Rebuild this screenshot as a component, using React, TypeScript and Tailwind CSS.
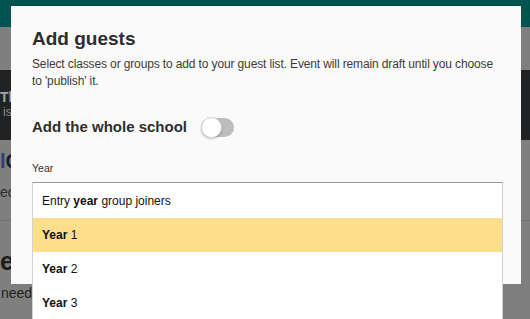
import React from "react";

export default function App() {
  const font = "font-['Liberation_Sans',Arial,Helvetica,sans-serif]";
  return (
    <div className={`relative w-[530px] h-[319px] overflow-hidden bg-[#7f7f7f] ${font}`}>
      {/* page behind the overlay */}
      <div className="flex flex-col">
        <div className="h-[27px] bg-[#00544f]" />
        <div className="h-[43px]" />
        <div className="h-[70px] bg-[#212223] pt-[19px]">
          <div className="text-[14px] leading-[16px] font-bold text-[#a3a3a3] whitespace-nowrap">Th</div>
          <div className="ml-[3px] text-[12px] leading-[14px] text-[#8f8f8f] whitespace-nowrap">is</div>
        </div>
        <div className="h-[33px] flex items-end">
          <div className="text-[20px] leading-[24px] font-bold whitespace-nowrap">
            <span className="text-[#2c3f7c]">l</span>
            <span className="text-[#1a1b2c]">C</span>
          </div>
        </div>
        <div className="h-[27px] flex items-end">
          <div className="text-[14px] leading-[16px] text-[#2a2a2a] whitespace-nowrap">ec</div>
        </div>
        <div className="h-[21px] border-b border-[#717171]" />
        <div className="h-[55px] flex items-end">
          <div className="text-[25px] leading-[30px] font-bold text-[#1c1c1c] whitespace-nowrap">es</div>
        </div>
        <div className="h-[25px] flex items-end">
          <div className="ml-[1px] text-[14px] leading-[16px] text-[#222222] whitespace-nowrap">need</div>
        </div>
      </div>

      {/* modal */}
      <div className="absolute left-[11px] top-[6px] w-[510px] h-[278px] bg-[#fafafa] pl-[21px] pr-[18px] pt-[21px] text-[#333333]">
        <h2 className="text-[19px] leading-[24px] font-bold text-[#2e2e2e]">Add guests</h2>
        <p className="mt-[5px] text-[12px] leading-[17px] tracking-[-0.13px] text-[#3a3a3a]">
          Select classes or groups to add to your guest list. Event will remain draft until you choose to 'publish' it.
        </p>
        <div className="mt-[27px] flex items-center h-[20px]">
          <span className="text-[15px] leading-[20px] font-bold text-[#2e2e2e]">Add the whole school</span>
          <div className="relative ml-[14px] w-[33px] h-[19px] rounded-full bg-[#bdbdbd]">
            <div className="absolute left-0 top-[-1px] w-[21px] h-[21px] rounded-full bg-white border border-[#d6d6d6] shadow-[0_1px_2px_rgba(0,0,0,0.25)]" />
          </div>
        </div>
        <div className="mt-[24px] text-[10.5px] leading-[14px] text-[#333333]">Year</div>
        <div className="mt-[7px] w-[471px] bg-white border-x border-[#d2d2d2] border-t border-t-[#9a9a9a] text-[12px] text-[#111111]">
          <div className="h-[35px] flex items-center pl-[9px]">
            Entry&nbsp;<b>year</b>&nbsp;group joiners
          </div>
          <div className="h-[34px] flex items-center pl-[9px] bg-[#fddf8b]">
            <b>Year</b>&nbsp;1
          </div>
          <div className="h-[34px] flex items-center pl-[9px]">
            <b>Year</b>&nbsp;2
          </div>
          <div className="h-[34px] flex items-center pl-[9px]">
            <b>Year</b>&nbsp;3
          </div>
        </div>
      </div>
    </div>
  );
}
